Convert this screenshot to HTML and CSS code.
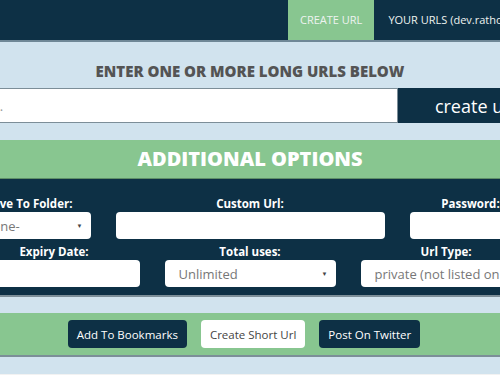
FILE: index.html
```html
<!DOCTYPE html>
<html lang="en">
<head>
    <meta charset="UTF-8">
    <meta name="viewport" content="width=device-width, initial-scale=1.0">
    <title>Create Short Url</title>
    <link rel="stylesheet" href="styles.css">
</head>
<body>
    <header class="navbar">
        <ul class="nav-links">
            <li class="active"><a href="#">CREATE URL</a></li>
            <li><a href="#">YOUR URLS (dev.rathore)</a></li>
        </ul>
    </header>

    <main class="wrap">
        <section class="enter-section">
            <h2>ENTER ONE OR MORE LONG URLS BELOW</h2>
            <div class="url-group">
                <input type="text" class="url-input" placeholder="...">
                <button class="create-btn">create url</button>
            </div>
        </section>

        <section class="options-section">
            <h2 class="options-title">ADDITIONAL OPTIONS</h2>
            <div class="options-panel">
                <div class="options-row row-wide">
                    <div class="field">
                        <label>Save To Folder:</label>
                        <div class="select-wrap">
                            <select class="folder-select"><option>-None-</option></select>
                        </div>
                    </div>
                    <div class="field">
                        <label>Custom Url:</label>
                        <input type="text">
                    </div>
                    <div class="field">
                        <label>Password:</label>
                        <input type="password">
                    </div>
                </div>
                <div class="options-row row-even">
                    <div class="field">
                        <label>Expiry Date:</label>
                        <input type="text">
                    </div>
                    <div class="field">
                        <label>Total uses:</label>
                        <div class="select-wrap">
                            <select><option>Unlimited</option></select>
                        </div>
                    </div>
                    <div class="field">
                        <label>Url Type:</label>
                        <div class="select-wrap">
                            <select><option>private (not listed on site)</option></select>
                        </div>
                    </div>
                </div>
            </div>
        </section>

        <section class="actions">
            <button class="btn">Add To Bookmarks</button>
            <button class="btn btn-light">Create Short Url</button>
            <button class="btn">Post On Twitter</button>
        </section>
    </main>

    <footer class="page-footer"></footer>
</body>
</html>
```

FILE: styles.css
```css
/* Global Styles */
body {
    font-family: "Open Sans", Arial, sans-serif;
    background-color: #d1e3ee;
    margin: 0;
    padding: 0;
    overflow: hidden;
}

/* Navbar */
.navbar {
    background-color: #0d3045;
    height: 40px;
    border-bottom: 2px solid #6f8796;
    overflow: hidden;
}

.nav-links {
    list-style: none;
    margin: 0;
    padding: 0 0 0 288px;
    display: flex;
    white-space: nowrap;
}

.nav-links a {
    display: block;
    line-height: 40px;
    padding: 0 14px;
    font-size: 11px;
    color: #eef3f0;
    text-decoration: none;
}

.nav-links .active a {
    background-color: #88c690;
    padding: 0 12px;
}

/* Main Layout */
.wrap {
    margin: 0 -44px;
}

.enter-section h2 {
    margin: 0;
    padding: 19px 0 7px;
    text-align: center;
    font-size: 15px;
    font-weight: 800;
    color: #545454;
}

.url-group {
    display: flex;
    height: 35px;
}

.url-input {
    flex: 1;
    border: 1px solid #7c8e98;
    border-left: none;
    padding: 0 0 0 37px;
    font-family: inherit;
    font-size: 13px;
    outline: none;
}

.url-input::placeholder {
    color: #999;
}

.create-btn {
    width: 146px;
    background-color: #0d3045;
    color: #fff;
    border: none;
    font-family: inherit;
    font-size: 18px;
    padding: 0 0 0 8px;
}

/* Additional Options */
.options-section {
    margin-top: 17px;
}

.options-title {
    margin: 0;
    background-color: #88c690;
    color: #fff;
    text-align: center;
    font-size: 20px;
    font-weight: 800;
    line-height: 38px;
    border-bottom: 1px solid #5f8f68;
}

.options-panel {
    background-color: #0d3045;
    padding: 16px 0 8px;
    border-bottom: 2px solid #7c8e98;
}

.options-row {
    display: grid;
}

.row-wide {
    grid-template-columns: 1fr 2fr 1fr;
}

.row-even {
    grid-template-columns: 1fr 1fr 1fr;
    margin-top: 4px;
}

.field {
    padding: 0 12.5px;
    display: flex;
    flex-direction: column;
}

.field label {
    color: #fff;
    font-size: 11.5px;
    font-weight: 700;
    text-align: center;
    line-height: 17px;
}

.field input,
.field select {
    height: 27px;
    width: 100%;
    box-sizing: border-box;
    border: none;
    border-radius: 4px;
    background-color: #fff;
    font-family: inherit;
    font-size: 13px;
    color: #777;
    padding: 0 14px;
    appearance: none;
    -webkit-appearance: none;
    outline: none;
}

.field .folder-select {
    padding-left: 10px;
}

.select-wrap {
    position: relative;
}

.select-wrap::after {
    content: "\25BC";
    position: absolute;
    right: 8px;
    top: 10px;
    font-size: 6px;
    color: #444;
    pointer-events: none;
}

/* Buttons */
.actions {
    margin-top: 16px;
    background-color: #88c690;
    border-bottom: 2px solid #7c8e98;
    padding: 7px 12px 7px 0;
    display: flex;
    justify-content: center;
    gap: 14px;
}

.btn {
    height: 28px;
    padding: 0 9px;
    border: none;
    border-radius: 4px;
    background-color: #0d3045;
    color: #fff;
    font-family: inherit;
    font-size: 11.5px;
    cursor: pointer;
}

.btn-light {
    background-color: #fff;
    color: #444;
}

.page-footer {
    margin-top: 17px;
    height: 40px;
    background-color: #f2f2f2;
}
```
